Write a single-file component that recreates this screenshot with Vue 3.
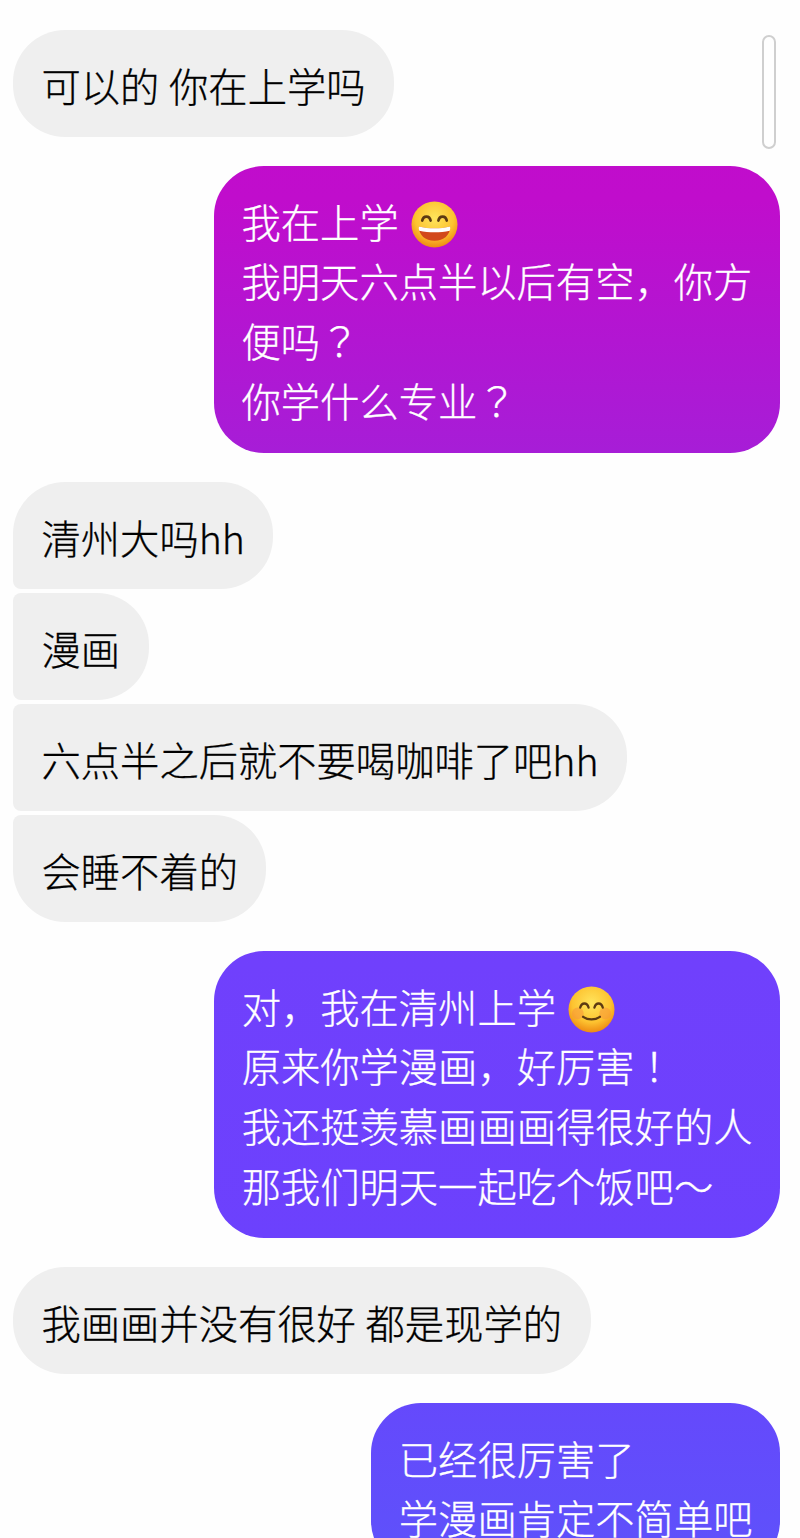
<script setup>
const groups = [
  { side: 'them', items: [{ lines: ['可以的 你在上学吗'] }] },
  {
    side: 'me',
    items: [{
      lines: ['我在上学', '我明天六点半以后有空，你方便吗？', '你学什么专业？'],
      emoji: { line: 0, type: 'grin' }
    }]
  },
  {
    side: 'them',
    items: [
      { lines: ['清州大吗hh'] },
      { lines: ['漫画'] },
      { lines: ['六点半之后就不要喝咖啡了吧hh'] },
      { lines: ['会睡不着的'] }
    ]
  },
  {
    side: 'me',
    items: [{
      lines: ['对，我在清州上学', '原来你学漫画，好厉害！', '我还挺羡慕画画画得很好的人', '那我们明天一起吃个饭吧～'],
      emoji: { line: 0, type: 'smile' }
    }]
  },
  { side: 'them', items: [{ lines: ['我画画并没有很好 都是现学的'] }] },
  { side: 'me', items: [{ lines: ['已经很厉害了', '学漫画肯定不简单吧'] }] }
]

// ？ and ！ sit centred in their cell in the reference, the TC font does that
function splitLine(line) {
  return line.split(/([？！])/).filter(Boolean)
}
</script>

<template>
  <div class="chat">
    <div class="scrollbar"></div>
    <div
      v-for="(group, g) in groups"
      :key="g"
      class="group"
      :class="group.side"
    >
      <div
        v-for="(item, i) in group.items"
        :key="i"
        class="bubble"
      >
        <div
          v-for="(line, l) in item.lines"
          :key="l"
          class="line"
        >
          <span
            v-for="(part, p) in splitLine(line)"
            :key="p"
            :class="{ punct: part === '？' || part === '！' }"
          >{{ part }}</span>
          <svg
            v-if="item.emoji && item.emoji.line === l"
            class="emoji"
            viewBox="0 0 48 48"
          >
            <defs>
              <radialGradient id="face" cx="50%" cy="36%" r="64%">
                <stop offset="0" stop-color="#ffe45c" />
                <stop offset="0.65" stop-color="#fdc330" />
                <stop offset="1" stop-color="#ee8a12" />
              </radialGradient>
            </defs>
            <circle cx="24" cy="24" r="23.5" fill="url(#face)" />
            <template v-if="item.emoji.type === 'grin'">
              <path d="M11.500 20c1-5.500 7.500-5.500 8.500 0" fill="none" stroke="#5d3a12" stroke-width="2.800" stroke-linecap="round" />
              <path d="M28 20c1-5.500 7.500-5.500 8.500 0" fill="none" stroke="#5d3a12" stroke-width="2.800" stroke-linecap="round" />
              <path d="M8 26c10 2.500 22 2.500 32 0 0 9-6.500 14.500-16 14.500S8 35 8 26z" fill="#d2491b" />
              <path d="M8 26c10 2.500 22 2.500 32 0 .2 1.500 0 3-.4 4.300-10 2.300-21 2.300-31.200 0-.4-1.300-.6-2.800-.4-4.300z" fill="#fff" />
            </template>
            <template v-else>
              <circle cx="10" cy="28" r="6" fill="#f7953a" opacity="0.55" />
              <circle cx="38" cy="28" r="6" fill="#f7953a" opacity="0.55" />
              <path d="M12.500 22c1.500-5.500 7-5.500 8.500 0" fill="none" stroke="#5d3a12" stroke-width="2.400" stroke-linecap="round" />
              <path d="M27 22c1.500-5.500 7-5.500 8.500 0" fill="none" stroke="#5d3a12" stroke-width="2.400" stroke-linecap="round" />
              <path d="M15.500 31.500c4.500 3.500 12.500 3.500 17 0" fill="none" stroke="#5d3a12" stroke-width="2.400" stroke-linecap="round" />
            </template>
          </svg>
        </div>
      </div>
    </div>
  </div>
</template>

<style scoped>
.chat {
  position: relative;
  height: 1538px;
  box-sizing: border-box;
  padding: 30px 20px 0 13px;
  display: flex;
  flex-direction: column;
  gap: 29px;
  overflow: hidden;
  background: #fefefe;
  font-family: "Noto Sans CJK SC", "Noto Sans", sans-serif;
  font-size: 39.3px;
  font-weight: 300;
  word-spacing: 1px;
  -webkit-text-stroke: 0.3px currentColor;
}

.scrollbar {
  position: absolute;
  top: 35px;
  left: 762px;
  width: 14px;
  height: 114px;
  box-sizing: border-box;
  border: 2px solid #cfcfcf;
  border-radius: 7px;
}

.group {
  display: flex;
  flex-direction: column;
  gap: 4px;
  flex-shrink: 0;
}

.bubble {
  box-sizing: border-box;
}

.punct {
  font-family: "Noto Sans CJK TC", sans-serif;
}

.them {
  align-items: flex-start;
}

.them .bubble {
  padding: 25px 28.500px 23px 28.500px;
  line-height: 59px;
  background: #efefef;
  color: #000;
  border-radius: 8px 52px 52px 8px;
}

.them .bubble:first-child {
  border-top-left-radius: 52px;
}

.them .bubble:last-child {
  border-bottom-left-radius: 52px;
}

.me {
  align-items: flex-end;
}

.me .bubble {
  max-width: 566px;
  padding: 24.500px 27.500px 23.500px;
  line-height: 59.750px;
  color: #fff;
  border-radius: 50px;
  background: linear-gradient(180deg, #c20bcb 0, #c00dcc 200px, #a41fd8 480px, #7040fc 960px, #6c41fd 1240px, #5f50fb 1538px) fixed;
}

.emoji {
  width: 47px;
  height: 47px;
  margin-left: 12px;
  vertical-align: -10px;
}
</style>

<style>
html,
body {
  margin: 0;
  overflow: hidden;
}
</style>
